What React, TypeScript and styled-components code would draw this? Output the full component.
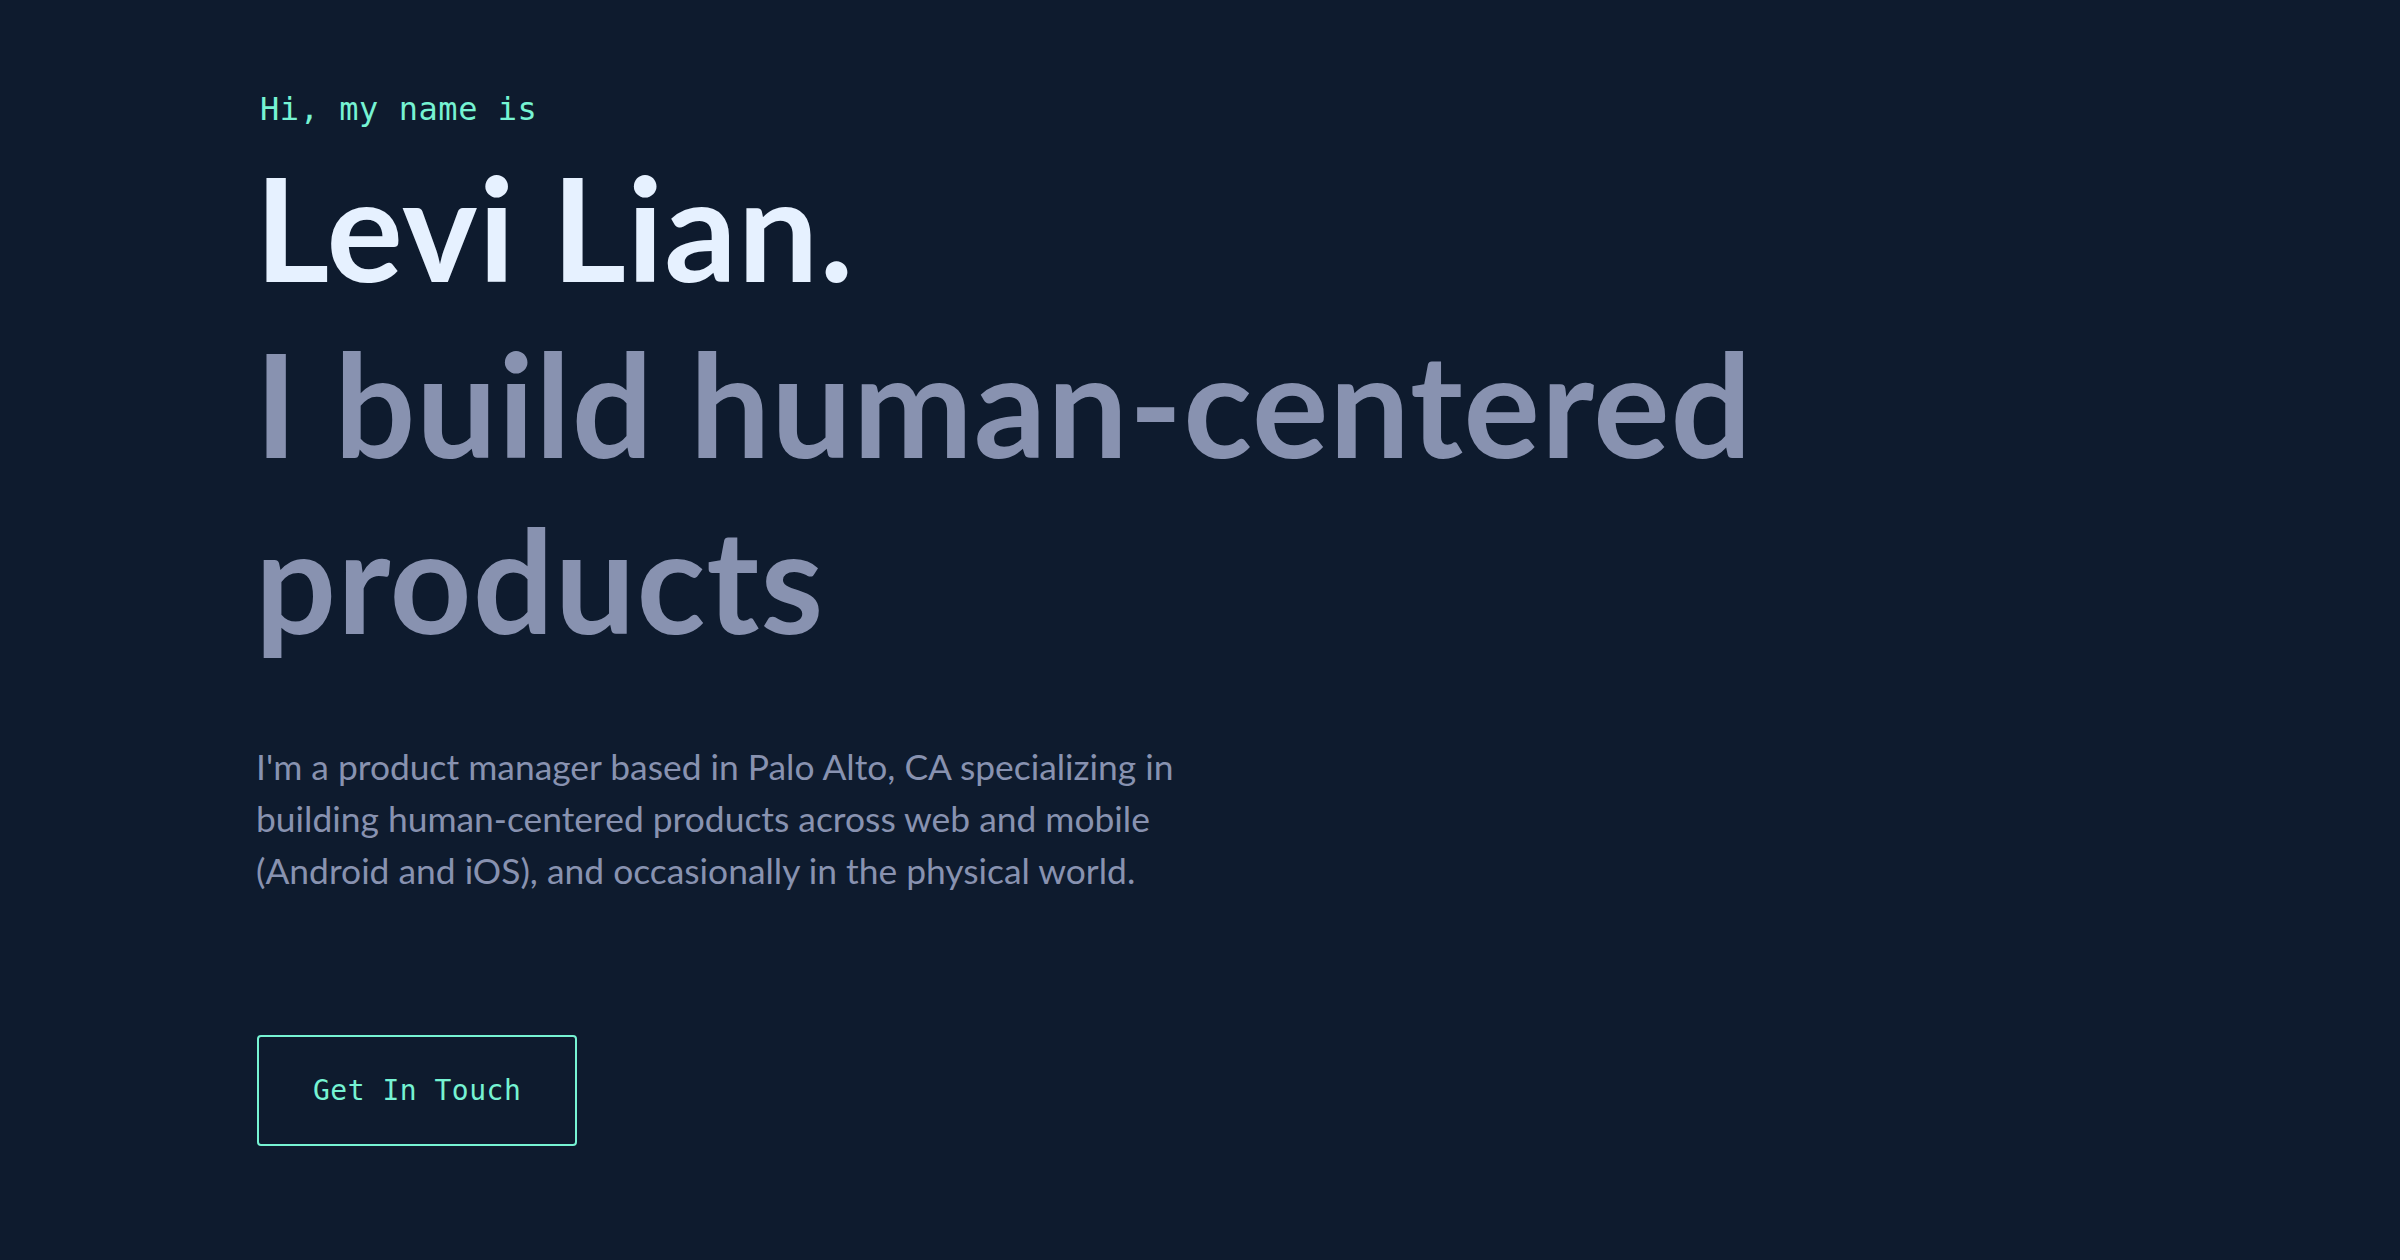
import React from "react";
import styled, { createGlobalStyle } from "styled-components";

const GlobalStyle = createGlobalStyle`
  html, body {
    margin: 0;
    padding: 0;
    background: #0e1b2e;
  }
  * { box-sizing: border-box; }
`;

const Hero = styled.section`
  min-height: 1260px;
  background: #0e1b2e;
  display: flex;
  flex-direction: column;
  align-items: flex-start;
  padding: 92px 0 0 255px;
`;

const Greeting = styled.h1`
  margin: 0 0 12px 5px;
  font-family: "DejaVu Sans Mono", "Liberation Mono", monospace;
  font-size: 32px;
  font-weight: 400;
  line-height: 1.1;
  letter-spacing: 0.55px;
  color: #76f3d3;
`;

const BigHeading = styled.h2<{ $tone: "light" | "slate" }>`
  margin: 0;
  font-family: Lato, "Noto Sans", sans-serif;
  font-size: 143px;
  font-weight: 700;
  line-height: 176px;
  letter-spacing: 1px;
  color: ${({ $tone }) => ($tone === "light" ? "#e6f1ff" : "#8892b0")};
`;

const Intro = styled.p`
  margin: 74px 0 0 1px;
  font-family: Lato, "Noto Sans", sans-serif;
  font-size: 35.4px;
  font-weight: 400;
  line-height: 52px;
  color: #8892b0;
  white-space: nowrap;
`;

const ContactButton = styled.a`
  margin: 138px 0 0 2px;
  display: inline-block;
  padding: 40px 54px 39px;
  border: 2px solid #76f3d3;
  border-radius: 4px;
  font-family: "DejaVu Sans Mono", "Liberation Mono", monospace;
  font-size: 28px;
  line-height: 1;
  letter-spacing: 0.5px;
  color: #76f3d3;
  text-decoration: none;
  background: transparent;
  cursor: pointer;
`;

export default function App() {
  return (
    <>
      <GlobalStyle />
      <Hero>
        <Greeting>Hi, my name is</Greeting>
        <BigHeading $tone="light">Levi Lian.</BigHeading>
        <BigHeading as="h3" $tone="slate">
          I build human-centered
          <br />
          products
        </BigHeading>
        <Intro>
          I'm a product manager based in Palo Alto, CA specializing in
          <br />
          building human-centered products across web and mobile
          <br />
          (Android and iOS), and occasionally in the physical world.
        </Intro>
        <ContactButton href="#contact">Get In Touch</ContactButton>
      </Hero>
    </>
  );
}
